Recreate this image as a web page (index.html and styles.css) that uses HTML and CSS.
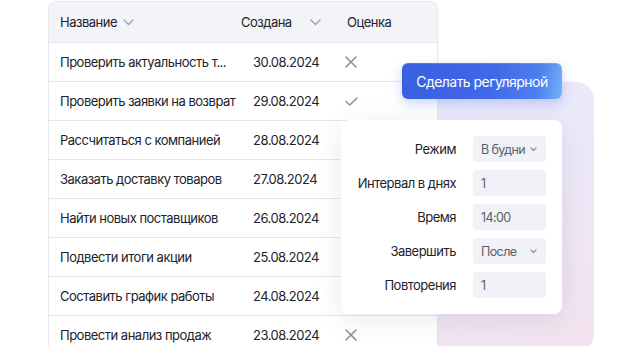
FILE: index.html
```html
<!DOCTYPE html>
<html lang="ru">
<head>
<meta charset="utf-8">
<link rel="stylesheet" href="styles.css">
</head>
<body>
<div class="stage">
  <div class="panel"></div>
  <div class="table">
    <div class="row head">
      <div class="c1">Название <svg class="chev" width="11" height="7" viewBox="0 0 11 7"><path d="M1 1l4.5 4.5L10 1" fill="none" stroke="#a3a7b5" stroke-width="1.5" stroke-linecap="round" stroke-linejoin="round"/></svg></div>
      <div class="c2">Создана <svg class="chev chev2" width="11" height="7" viewBox="0 0 11 7"><path d="M1 1l4.5 4.5L10 1" fill="none" stroke="#a3a7b5" stroke-width="1.5" stroke-linecap="round" stroke-linejoin="round"/></svg></div>
      <div class="c3">Оценка</div>
    </div>
    <div class="row"><div class="c1">Проверить актуальность т...</div><div class="c2 d">30.08.2024</div><div class="c3"><svg class="ic" width="12" height="12" viewBox="0 0 12 12"><path d="M1 1l10 10M11 1L1 11" stroke="#8c8f9b" stroke-width="1.6" stroke-linecap="round"/></svg></div></div>
    <div class="row"><div class="c1">Проверить заявки на возврат</div><div class="c2 d">29.08.2024</div><div class="c3"><svg class="ic" width="13" height="9" viewBox="0 0 13 9"><path d="M1 4.5l3.8 3.5L12 1" fill="none" stroke="#8c8f9b" stroke-width="1.5" stroke-linecap="round" stroke-linejoin="round"/></svg></div></div>
    <div class="row"><div class="c1">Рассчитаться с компанией</div><div class="c2 d">28.08.2024</div><div class="c3"></div></div>
    <div class="row"><div class="c1">Заказать доставку товаров</div><div class="c2 d">27.08.2024</div><div class="c3"></div></div>
    <div class="row"><div class="c1">Найти новых поставщиков</div><div class="c2 d">26.08.2024</div><div class="c3"></div></div>
    <div class="row"><div class="c1">Подвести итоги акции</div><div class="c2 d">25.08.2024</div><div class="c3"></div></div>
    <div class="row"><div class="c1">Составить график работы</div><div class="c2 d">24.08.2024</div><div class="c3"></div></div>
    <div class="row"><div class="c1">Провести анализ продаж</div><div class="c2 d">23.08.2024</div><div class="c3"><svg class="ic" width="12" height="12" viewBox="0 0 12 12"><path d="M1 1l10 10M11 1L1 11" stroke="#8c8f9b" stroke-width="1.6" stroke-linecap="round"/></svg></div></div>
  </div>
  <button class="btn">Сделать регулярной</button>
  <div class="popup">
    <div class="frow"><span class="lbl">Режим</span><span class="inp sel">В будни<svg width="7" height="5" viewBox="0 0 7 5"><path d="M1 1l2.5 2.5L6 1" fill="none" stroke="#8d93a8" stroke-width="1.3" stroke-linecap="round" stroke-linejoin="round"/></svg></span></div>
    <div class="frow"><span class="lbl">Интервал в днях</span><span class="inp">1</span></div>
    <div class="frow"><span class="lbl">Время</span><span class="inp">14:00</span></div>
    <div class="frow"><span class="lbl">Завершить</span><span class="inp sel">После<svg width="7" height="5" viewBox="0 0 7 5"><path d="M1 1l2.5 2.5L6 1" fill="none" stroke="#8d93a8" stroke-width="1.3" stroke-linecap="round" stroke-linejoin="round"/></svg></span></div>
    <div class="frow"><span class="lbl">Повторения</span><span class="inp">1</span></div>
  </div>
</div>
</body>
</html>
```
FILE: styles.css
```css
* { box-sizing: border-box; }
html, body { margin: 0; padding: 0; background: #fff; }
body { font-family: Inter, "Noto Sans", sans-serif; font-size: 13px; letter-spacing: -0.5px; color: #22232a; }
.stage { position: relative; width: 642px; height: 346px; overflow: hidden; padding: 1px 0 0 48px; }
.panel {
  position: absolute; left: 400px; top: 82px; width: 194px; height: 270px;
  border-radius: 18px;
  background: linear-gradient(160deg, #e8ebfc 0%, #ece8f9 40%, #f4e2ee 100%);
}
.table {
  position: relative; width: 390px;
  border: 1px solid #e6e7ef; border-bottom: none;
  border-radius: 8px 8px 0 0; background: #fff; overflow: hidden;
}
.row {
  display: grid; grid-template-columns: 192px 106px 1fr;
  height: 39px; align-items: center; border-bottom: 1px solid #e6e7ef;
}
.row.head { height: 41px; background: #f3f4f8; }
.c1 { padding-left: 11px; white-space: nowrap; display: flex; align-items: center; }
.c2 { display: flex; align-items: center; white-space: nowrap; }
.c2.d { padding-left: 12px; }
.c3 { display: flex; align-items: center; }
.chev { margin-left: 6px; margin-top: 1px; }
.chev2 { margin-left: 18px; }
.ic { margin-left: -2px; }
.btn {
  position: absolute; left: 402px; top: 63px; width: 160px; height: 36px;
  border: none; border-radius: 6px; color: #fff;
  font-family: Inter, "Noto Sans", sans-serif; font-size: 14px; letter-spacing: -0.55px; padding: 0;
  background: linear-gradient(100deg, #3a5fe2 0%, #3f68e7 55%, #4f80ee 85%, #75b4f7 100%);
  box-shadow: 0 4px 12px rgba(60, 95, 225, 0.28), inset 0 1px 0 rgba(255,255,255,0.15);
}
.popup {
  position: absolute; left: 341px; top: 120px; width: 221px; height: 194px;
  background: #fff; border-radius: 8px; padding: 16px 16px 0 0;
  box-shadow: 0 6px 28px rgba(40, 45, 80, 0.10);
  display: flex; flex-direction: column; gap: 8px;
}
.frow { display: flex; align-items: center; justify-content: flex-end; gap: 17px; }
.lbl { color: #22232a; white-space: nowrap; }
.inp {
  width: 73px; height: 26px; border-radius: 4px; background: #f1f2f7;
  display: flex; align-items: center; justify-content: space-between;
  padding: 0 9px 0 8px; color: #5b5f6b; white-space: nowrap;
  font-size: 12.5px; letter-spacing: -0.6px;
}
.inp svg { flex-shrink: 0; }
```
